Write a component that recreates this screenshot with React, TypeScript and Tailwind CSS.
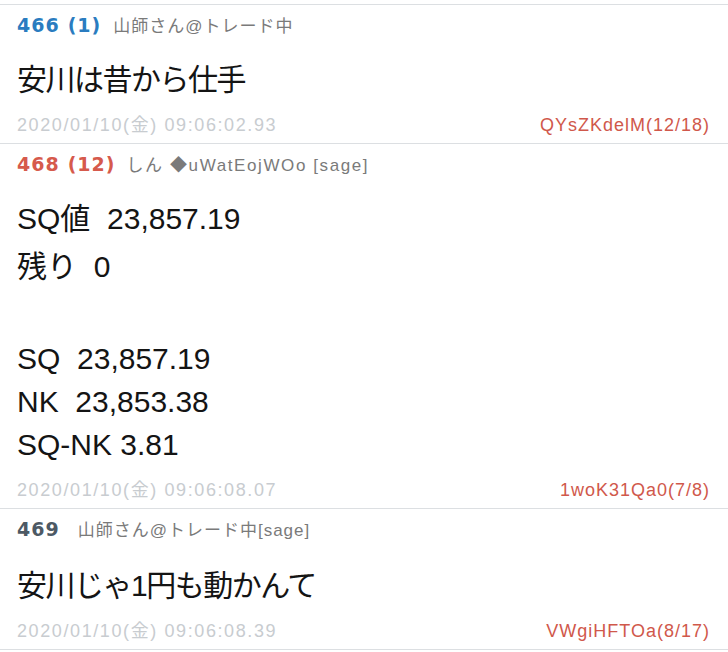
import React from 'react';

type Line = { text: string; cls: string };

type Post = {
  no: string;
  count?: string;
  noColor: string;
  name: string;
  nameCls: string;
  lines: Line[];
  bodyPad: string;
  date: string;
  id: string;
};

// line boxes: lines with kanji/kana sit a bit taller than plain latin ones
const cjk = 'h-[48px] leading-[48px] tracking-[-1.5px]';
const mixed = 'h-[48px] leading-[48px]';
const latin = 'h-[43px] leading-[43px]';
const blank = 'h-[46px]';

const posts: Post[] = [
  {
    no: '466',
    count: '(1)',
    noColor: 'text-[#2a7cc0]',
    name: '山師さん@トレード中',
    nameCls: 'ml-[12px] tracking-[1px]',
    lines: [{ text: '安川は昔から仕手', cls: cjk }],
    bodyPad: 'pt-[11px]',
    date: '2020/01/10(金) 09:06:02.93',
    id: 'QYsZKdelM(12/18)',
  },
  {
    no: '468',
    count: '(12)',
    noColor: 'text-[#d65a4c]',
    name: 'しん ◆uWatEojWOo [sage]',
    nameCls: 'ml-[11px] tracking-[1.6px]',
    lines: [
      { text: 'SQ値  23,857.19', cls: mixed },
      { text: '残り  0', cls: mixed },
      { text: '', cls: blank },
      { text: 'SQ  23,857.19', cls: latin },
      { text: 'NK  23,853.38', cls: latin },
      { text: 'SQ-NK 3.81', cls: latin },
    ],
    bodyPad: 'pt-[11px] pb-[3px]',
    date: '2020/01/10(金) 09:06:08.07',
    id: '1woK31Qa0(7/8)',
  },
  {
    no: '469',
    noColor: 'text-[#4d5964]',
    name: '山師さん@トレード中[sage]',
    nameCls: 'ml-[18px] tracking-[1px]',
    lines: [{ text: '安川じゃ1円も動かんて', cls: cjk }],
    bodyPad: 'pt-[13px]',
    date: '2020/01/10(金) 09:06:08.39',
    id: 'VWgiHFTOa(8/17)',
  },
];

function PostItem({ post }: { post: Post }) {
  return (
    <div className="border-t border-[#dcdfe2]">
      {/* header: number, reply count, name */}
      <div className="h-[40px] flex items-center pl-[17px]">
        <div className="flex items-baseline">
          <span className={`font-['DejaVu_Sans',sans-serif] font-bold text-[19px] tracking-[1px] ${post.noColor}`}>
            {post.no}
          </span>
          {post.count && (
            <span className={`ml-[8px] font-['DejaVu_Sans',sans-serif] font-bold text-[19px] tracking-[1px] ${post.noColor}`}>
              {post.count}
            </span>
          )}
          <span className={`${post.nameCls} text-[17px] text-[#7a7a7a]`}>{post.name}</span>
        </div>
      </div>

      {/* message body */}
      <div className={`px-[17px] text-[30px] text-[#141414] whitespace-pre ${post.bodyPad}`}>
        {post.lines.map((l, i) => (
          <div key={i} className={l.cls}>
            {l.text}
          </div>
        ))}
      </div>

      {/* footer: timestamp and id */}
      <div className="h-[39px] pt-[3px] flex items-center justify-between pl-[17px] pr-[18px] text-[18px]">
        <span className="tracking-[1.6px] text-[#c8ccd0]">{post.date}</span>
        <span className="tracking-[1px] text-[#d0584b]">{post.id}</span>
      </div>
    </div>
  );
}

export default function App() {
  return (
    <div className="w-[728px] h-[652px] overflow-hidden bg-white pt-[4px] font-['Liberation_Sans','Noto_Sans_CJK_JP',sans-serif]">
      {posts.map((p) => (
        <PostItem key={p.no} post={p} />
      ))}
      <div className="border-t border-[#dcdfe2]" />
    </div>
  );
}
